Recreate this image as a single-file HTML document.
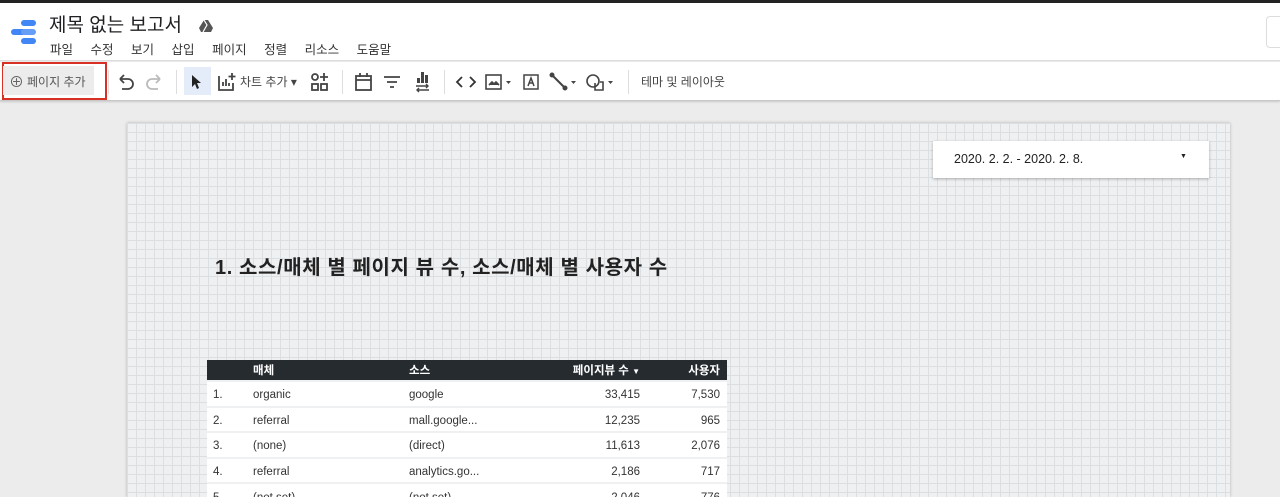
<!DOCTYPE html>
<html><head><meta charset="utf-8"><style>
*{box-sizing:border-box;margin:0;padding:0}
html,body{width:1280px;height:497px;overflow:hidden}
body{background:#ececec;font-family:"Liberation Sans","Noto Sans CJK KR",sans-serif;position:relative;color:#202124}
.top{position:absolute;left:0;top:0;width:1280px;height:3px;background:#222}
.hdr{position:absolute;left:0;top:3px;width:1280px;height:58px;background:#fff;border-bottom:1px solid #ddd}
.title{position:absolute;left:49px;top:7px;font-size:19px;color:#202124}
.menu{position:absolute;left:50px;top:36px;font-size:12.5px;color:#333}
.menu span{margin-right:17.5px}
.tb{position:absolute;left:0;top:62px;width:1280px;height:39px;background:#fff;border-bottom:1px solid #c8c8c8;box-shadow:0 1px 2px rgba(0,0,0,.15)}
.ab{position:absolute;left:2px;top:0px;width:105px;height:38px;border:2px solid #d93025}
.abin{position:absolute;left:3px;top:4px;width:91px;height:29px;background:#ececec;font-size:12px;color:#555;padding:7px 0 0 24px}
.sep{position:absolute;top:8px;width:1px;height:24px;background:#ddd}
.t{position:absolute;font-size:12px;color:#444;top:11px}
.canvas{position:absolute;left:127px;top:123px;width:1103px;height:374px;background-color:#eef0f2;background-image:linear-gradient(#dcdfe2 1px,transparent 1px),linear-gradient(90deg,#dcdfe2 1px,transparent 1px);background-size:9px 9px;box-shadow:0 0 3px rgba(0,0,0,.25)}
.date{position:absolute;left:933px;top:141px;width:276px;height:37px;background:#fff;box-shadow:0 1px 3px rgba(0,0,0,.3);font-size:12.5px;padding:11px 0 0 21px;color:#222}
.h1{position:absolute;left:215px;top:251px;font-size:20px;letter-spacing:0.6px;font-weight:bold;color:#222}
table{position:absolute;left:207px;top:360px;width:520px;border-collapse:collapse;font-size:11.5px}
th{background:#262b30;color:#fff;font-weight:bold;height:21px;text-align:left;font-size:11.5px}
td{background:#fff;height:25.5px;border-top:2px solid #eef0f2;color:#333;padding-top:3px}
.r{text-align:right;padding-right:7px}
</style></head><body>
<div class="top"></div>
<div class="hdr">
<svg style="position:absolute;left:11px;top:17px" width="26" height="26"><g stroke-linecap="round" stroke-width="6"><line x1="13" y1="3" x2="22" y2="3" stroke="#4285f4"/><line x1="3" y1="12" x2="13" y2="12" stroke="#4285f4"/><line x1="13" y1="21" x2="22" y2="21" stroke="#4285f4"/><line x1="13" y1="12" x2="22" y2="12" stroke="#669df6"/></g></svg>
<div class="title">제목 없는 보고서</div>
<svg style="position:absolute;left:199px;top:17px" width="14" height="12"><path d="M5 0h4l5 8-2 4H2L0 8z" fill="#555"/><path d="M5 0l3 5-4 7" stroke="#fff" stroke-width="1.2" fill="none"/></svg>
<div class="menu"><span>파일</span><span>수정</span><span>보기</span><span>삽입</span><span>페이지</span><span>정렬</span><span>리소스</span><span>도움말</span></div>
<div style="position:absolute;left:1266px;top:13px;width:20px;height:32px;border:1px solid #ddd;border-radius:4px"></div>
</div>
<div class="tb">
<div class="ab"></div><div class="abin"><span style="position:absolute;left:6px;top:5px;font-size:15px;color:#666">⊕</span>페이지 추가</div>
<div class="sep" style="left:108px"></div>
<svg style="position:absolute;left:116px;top:11px" width="60" height="18" fill="none" stroke-width="1.8"><path d="M4 6h8a5 5 0 0 1 0 10H6M4 6l4-4M4 6l4 4" stroke="#444"/><path d="M44 6h-8a5 5 0 0 0 0 10h6M44 6l-4-4M44 6l-4 4" stroke="#bbb"/></svg>
<div class="sep" style="left:176px"></div>
<div style="position:absolute;left:184px;top:5px;width:27px;height:28px;background:#e3ecf8"></div>
<svg style="position:absolute;left:191px;top:12px" width="12" height="16"><path d="M1 1v12l3-3 2 5 2-1-2-5h4z" fill="#222"/></svg>
<svg style="position:absolute;left:216px;top:9px" width="22" height="22" fill="none" stroke="#444" stroke-width="1.8"><path d="M3 5v14h14V12M7 15v-4M10 15v-7M13 15v-3M16 2v7M12.5 5.5h7"/></svg>
<div class="t" style="left:240px">차트 추가 ▾</div>
<svg style="position:absolute;left:310px;top:10px" width="20" height="20" fill="none" stroke="#444" stroke-width="1.8"><circle cx="5" cy="5" r="3"/><rect x="2" y="12" width="6" height="6"/><rect x="11" y="12" width="6" height="6"/><path d="M14 1v8M10 5h8"/></svg>
<div class="sep" style="left:342px"></div>
<svg style="position:absolute;left:354px;top:10px" width="20" height="20" fill="none" stroke="#444" stroke-width="1.8"><rect x="2" y="4" width="15" height="14"/><path d="M2 8h15M6 1v4M13 1v4"/></svg>
<svg style="position:absolute;left:382px;top:12px" width="20" height="16" stroke="#444" stroke-width="1.8"><path d="M2 3h16M5 8h10M8 13h4"/></svg>
<svg style="position:absolute;left:412px;top:9px" width="20" height="22" fill="#444"><rect x="9" y="1" width="3" height="11"/><rect x="13" y="4" width="3" height="8"/><rect x="5" y="7" width="3" height="5"/><path d="M4 15h12M14 13l2 2-2 2M5 19h12M7 17l-2 2 2 2" stroke="#444" stroke-width="1.4" fill="none"/></svg>
<div class="sep" style="left:444px"></div>
<svg style="position:absolute;left:455px;top:13px" width="22" height="14" fill="none" stroke="#333" stroke-width="1.8"><path d="M7 2L2 7l5 5M15 2l5 5-5 5"/></svg>
<svg style="position:absolute;left:485px;top:11px" width="30" height="18" fill="none" stroke="#444" stroke-width="1.6"><rect x="1" y="2" width="15" height="14"/><path d="M4 12l3-3 2 2 2-2 3 3" fill="#444"/><path d="M21 8h5l-2.5 3z" fill="#444" stroke="none"/></svg>
<svg style="position:absolute;left:522px;top:10px" width="18" height="20" fill="none" stroke="#444" stroke-width="1.5"><rect x="2" y="3" width="14" height="14"/><path d="M6 14l3-8 3 8M7 11h4"/></svg>
<svg style="position:absolute;left:549px;top:9px" width="32" height="22" fill="none" stroke="#444" stroke-width="2"><path d="M3 4l13 13"/><circle cx="3" cy="4" r="1.5" fill="#444"/><circle cx="16" cy="17" r="1.5" fill="#444"/><path d="M22 10h5l-2.5 3z" fill="#444" stroke="none"/></svg>
<svg style="position:absolute;left:585px;top:9px" width="34" height="22" fill="none" stroke="#444" stroke-width="1.6"><circle cx="8" cy="10" r="6"/><path d="M10 12v7h8v-8h-3"/><path d="M23 10h5l-2.5 3z" fill="#444" stroke="none"/></svg>
<div class="sep" style="left:628px"></div>
<div class="t" style="left:641px">테마 및 레이아웃</div>
</div>
<div class="canvas"></div>
<div class="date">2020. 2. 2. - 2020. 2. 8.<span style="position:absolute;left:247px;top:12px;font-size:7px">▼</span></div>
<div class="h1">1. 소스/매체 별 페이지 뷰 수, 소스/매체 별 사용자 수</div>
<table>
<tr><th style="width:46px"></th><th style="width:156px">매체</th><th style="width:110px">소스</th><th class="r" style="width:128px">페이지뷰 수 <span style="font-size:8px">▼</span></th><th class="r">사용자</th></tr>
<tr><td style="padding-left:6px">1.</td><td>organic</td><td>google</td><td class="r">33,415</td><td class="r">7,530</td></tr>
<tr><td style="padding-left:6px">2.</td><td>referral</td><td>mall.google...</td><td class="r">12,235</td><td class="r">965</td></tr>
<tr><td style="padding-left:6px">3.</td><td>(none)</td><td>(direct)</td><td class="r">11,613</td><td class="r">2,076</td></tr>
<tr><td style="padding-left:6px">4.</td><td>referral</td><td>analytics.go...</td><td class="r">2,186</td><td class="r">717</td></tr>
<tr><td style="padding-left:6px">5.</td><td>(not set)</td><td>(not set)</td><td class="r">2,046</td><td class="r">776</td></tr>
</table>
</body></html>
